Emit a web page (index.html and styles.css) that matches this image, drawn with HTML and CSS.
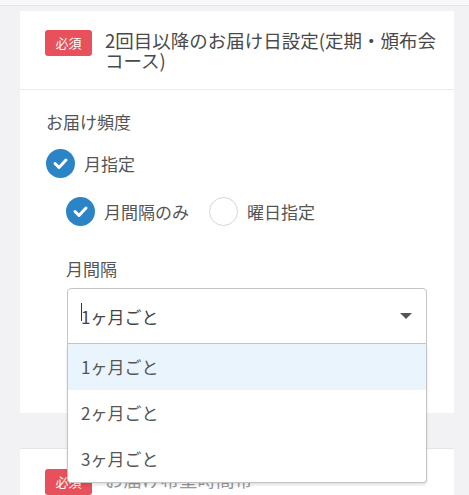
FILE: index.html
```html
<!DOCTYPE html>
<html lang="ja">
<head>
  <meta charset="UTF-8">
  <meta name="viewport" content="width=device-width, initial-scale=1.0">
  <title>お届け日設定</title>
  <link rel="stylesheet" href="styles.css">
</head>
<body>
<div class="topbar"></div>

<div class="page">
  <section class="card">
    <div class="card-head">
      <span class="badge">必須</span>
      <h2 class="card-title">2回目以降のお届け日設定(定期・頒布会コース)</h2>
    </div>

    <div class="card-body">
      <p class="label">お届け頻度</p>

      <div class="radio-row">
        <span class="radio checked">
          <svg viewBox="0 0 29 29" width="29" height="29"><polyline points="9,14.5 13,18.5 20,11" /></svg>
        </span>
        <span class="radio-text">月指定</span>
      </div>

      <div class="sub">
        <div class="radio-row">
          <span class="radio checked">
            <svg viewBox="0 0 29 29" width="29" height="29"><polyline points="9,14.5 13,18.5 20,11" /></svg>
          </span>
          <span class="radio-text">月間隔のみ</span>
          <span class="radio"></span>
          <span class="radio-text">曜日指定</span>
        </div>

        <p class="label sub-label">月間隔</p>

        <div class="select-wrap">
          <div class="select">
            <span class="caret"></span><span class="select-value">1ヶ月ごと</span>
            <span class="arrow"></span>
          </div>
          <ul class="options">
            <li class="option active">1ヶ月ごと</li>
            <li class="option">2ヶ月ごと</li>
            <li class="option">3ヶ月ごと</li>
          </ul>
        </div>
      </div>
    </div>
  </section>

  <section class="card card-next">
    <div class="card-head">
      <span class="badge">必須</span>
      <h2 class="card-title">お届け希望時間帯</h2>
    </div>
  </section>
</div>
</body>
</html>
```

FILE: styles.css
```css
body {
  margin: 0;
  background: #f2f2f4;
  font-family: "Noto Sans CJK JP", "Noto Sans", sans-serif;
  color: #555;
}
.topbar {
  height: 5px;
  background: #f8f8fa;
  border-bottom: 1px solid #e3e3e6;
}
.page {
  padding: 5px 15px 0 20px;
}
.card {
  background: #fff;
}
.card-head {
  display: flex;
  align-items: flex-start;
  gap: 13px;
  padding: 19px 14px 19px 25px;
  border-bottom: 1px solid #ececef;
}
.badge {
  flex: none;
  width: 47px;
  height: 26px;
  line-height: 26px;
  text-align: center;
  font-size: 13px;
  color: #fff;
  background: #e8505b;
  border-radius: 3px;
}
.card-title {
  margin: 0;
  font-size: 18.5px;
  font-weight: normal;
  line-height: 20px;
  color: #4a4a4a;
}
.card-body {
  padding: 20px 26px 69px 26px;
}
.label {
  margin: 0;
  font-size: 17px;
  line-height: 24px;
}
.radio-row {
  display: flex;
  align-items: center;
  margin-top: 15px;
}
.radio {
  flex: none;
  width: 29px;
  height: 29px;
  box-sizing: border-box;
  border-radius: 50%;
  border: 1.5px solid #d6d6d6;
}
.radio.checked {
  background: #2a84c6;
  border: none;
}
.radio svg {
  display: block;
  fill: none;
  stroke: #fff;
  stroke-width: 3;
  stroke-linecap: round;
  stroke-linejoin: round;
}
.radio-text {
  font-size: 17px;
  margin-left: 9px;
  margin-right: 20px;
}
.sub {
  padding-left: 20px;
}
.sub .radio-row {
  margin-top: 19px;
}
.sub-label {
  margin-top: 31px;
}
.select-wrap {
  position: relative;
  margin-top: 7px;
  margin-left: 1px;
  width: 360px;
}
.select {
  display: flex;
  align-items: center;
  height: 56px;
  box-sizing: border-box;
  padding: 0 13px;
  border: 1px solid #c4c4c4;
  border-radius: 4px 4px 0 0;
  font-size: 17px;
  color: #444;
}
.caret {
  display: inline-block;
  width: 1px;
  height: 18px;
  background: #333;
  margin-right: -1px;
  margin-top: -8px;
}
.select-value {
  flex: 1;
}
.arrow {
  width: 0;
  height: 0;
  border-left: 6px solid transparent;
  border-right: 6px solid transparent;
  border-top: 6px solid #555;
  margin-right: 1px;
}
.options {
  position: absolute;
  top: 56px;
  left: 0;
  right: 0;
  margin: 0;
  padding: 0;
  list-style: none;
  background: #fff;
  border: 1px solid #c4c4c4;
  border-top: none;
  border-radius: 0 0 4px 4px;
  box-shadow: 0 2px 3px rgba(0,0,0,0.12);
  z-index: 2;
}
.option {
  height: 46px;
  line-height: 46px;
  padding: 0 13px;
  font-size: 17px;
  color: #555;
}
.option.active {
  background: #eaf4fd;
}
.card-next {
  margin-top: 35px;
  border-top: 1px solid #e6e6e9;
}
.card-next .card-head {
  padding-top: 20px;
  border-bottom: none;
}
.card-next .card-title {
  color: #999;
}
```
